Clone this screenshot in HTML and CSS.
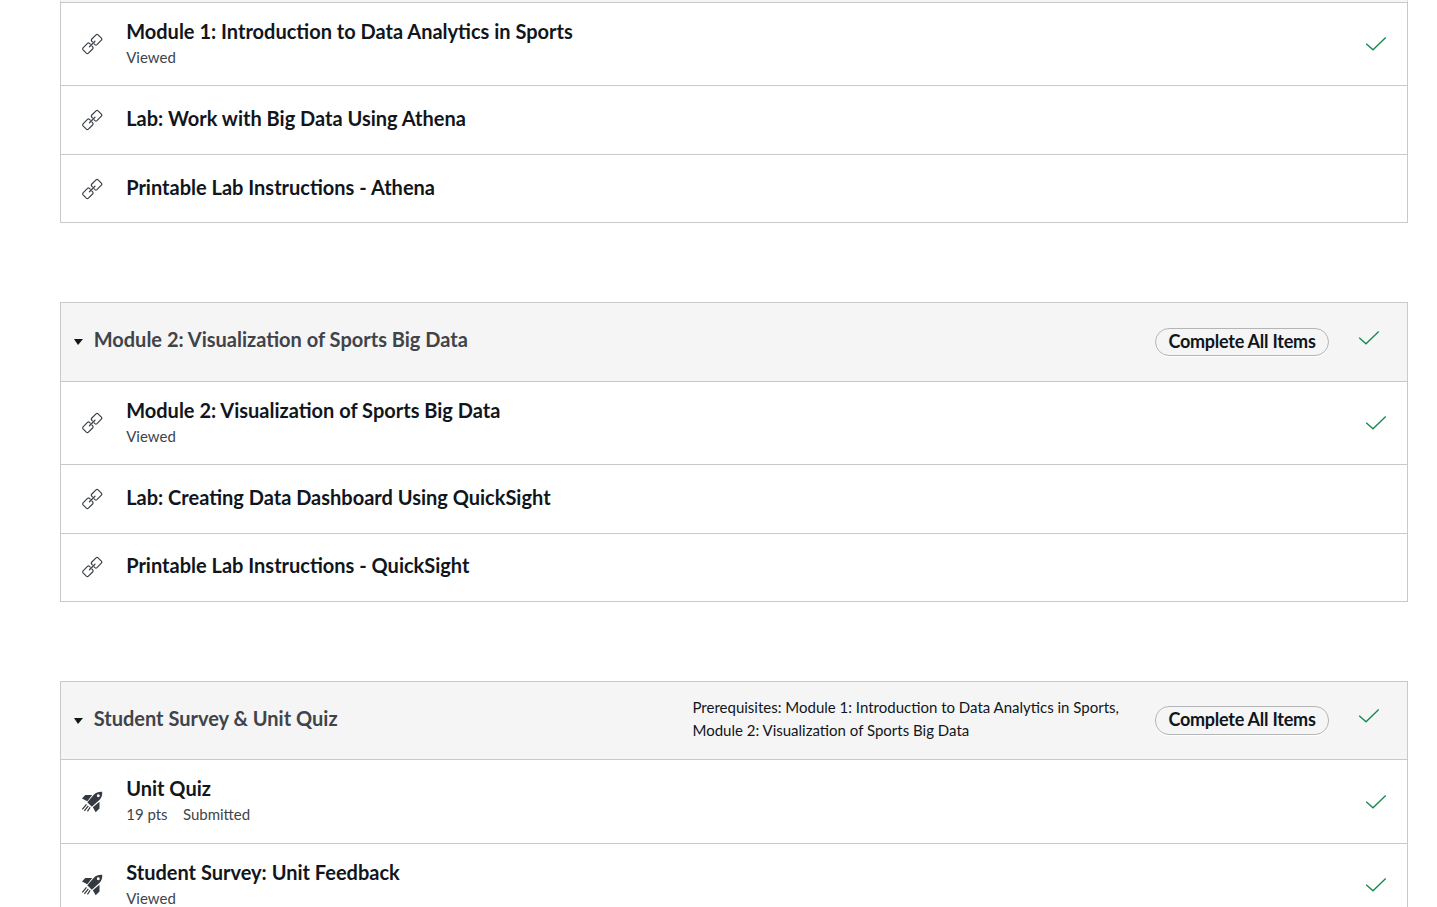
FILE: index.html
```
<!DOCTYPE html>
<html lang="en">
<head>
<meta charset="utf-8">
<title>Modules</title>
<link rel="stylesheet" href="styles.css">
</head>
<body>
<svg class="defs" width="0" height="0" aria-hidden="true">
  <symbol id="link" viewBox="0.1 0.3 21.4 21.4">
    <g fill="none" stroke="#3a3f45" stroke-width="1.15" stroke-linejoin="round" stroke-linecap="round">
      <path d="M11.2 8.9 10.4 8.1Q9.8 7.2 10.4 6.4L14.7 2.1Q15.7 1.2 16.7 2.1L19.9 5.3Q20.8 6.3 19.9 7.3L15.6 11.6Q14.6 12.4 13.7 11.6L12.9 10.8"/>
      <path d="M10.8 13.1 11.6 13.9Q12.2 14.8 11.6 15.6L7.3 19.9Q6.3 20.8 5.3 19.9L2.1 16.7Q1.2 15.7 2.1 14.7L6.4 10.4Q7.4 9.6 8.3 10.4L9.1 11.2"/>
      <path d="M8.3 13.7 13.7 8.3"/>
    </g>
  </symbol>
  <symbol id="rocket" viewBox="0.1 0.3 21.4 21.4">
    <path fill="#343a40" fill-rule="evenodd" d="M20.7 1.1C17.4.9 14.8 1.7 12.8 3.7L6.2 11.2 10.6 15.6 18 9C20.2 7 21 4.4 20.7 1.1ZM17 3.5A1.4 1.4 0 1 1 16.9 6.3 1.4 1.4 0 0 1 17 3.5Z"/>
    <path fill="#343a40" d="M11 4.2H4.2L1.1 7.6 6.2 10.3ZM18.1 10.8V17.4L14.4 20.9 11.6 16Z"/>
    <path fill="none" stroke="#343a40" stroke-width="1.2" d="M5.4 13.3 1.4 18.1M7.2 14.7 3.4 19.7M9 16.1 6.4 20.1"/>
  </symbol>
  <symbol id="check" viewBox="0 0 22 16">
    <path fill="none" stroke="#14874b" stroke-width="1.3" d="M1.2 7.7 8 13.8 20.7 1.5"/>
  </symbol>
</svg>
<main class="modules">
  <section class="module continued">
    <div class="item">
      <svg class="icon"><use href="#link"/></svg>
      <div class="info"><a class="title">Module 1: Introduction to Data Analytics in Sports</a><div class="meta"><span>Viewed</span></div></div>
      <svg class="check"><use href="#check"/></svg>
    </div>
    <div class="item single">
      <svg class="icon"><use href="#link"/></svg>
      <div class="info"><a class="title">Lab: Work with Big Data Using Athena</a></div>
    </div>
    <div class="item single last">
      <svg class="icon"><use href="#link"/></svg>
      <div class="info"><a class="title">Printable Lab Instructions - Athena</a></div>
    </div>
  </section>

  <section class="module visualization">
    <header class="head">
      <span class="arrow"></span>
      <h2 class="name">Module 2: Visualization of Sports Big Data</h2>
      <span class="pill">Complete All Items</span>
      <svg class="check"><use href="#check"/></svg>
    </header>
    <div class="item">
      <svg class="icon"><use href="#link"/></svg>
      <div class="info"><a class="title">Module 2: Visualization of Sports Big Data</a><div class="meta"><span>Viewed</span></div></div>
      <svg class="check"><use href="#check"/></svg>
    </div>
    <div class="item single">
      <svg class="icon"><use href="#link"/></svg>
      <div class="info"><a class="title">Lab: Creating Data Dashboard Using QuickSight</a></div>
    </div>
    <div class="item single last">
      <svg class="icon"><use href="#link"/></svg>
      <div class="info"><a class="title">Printable Lab Instructions - QuickSight</a></div>
    </div>
  </section>

  <section class="module survey">
    <header class="head">
      <span class="arrow"></span>
      <h2 class="name">Student Survey &amp; Unit Quiz</h2>
      <p class="prereq">Prerequisites: Module 1: Introduction to Data Analytics in Sports, Module 2: Visualization of Sports Big Data</p>
      <span class="pill">Complete All Items</span>
      <svg class="check"><use href="#check"/></svg>
    </header>
    <div class="item quiz">
      <svg class="icon"><use href="#rocket"/></svg>
      <div class="info"><a class="title">Unit Quiz</a><div class="meta"><span>19 pts</span><span>Submitted</span></div></div>
      <svg class="check"><use href="#check"/></svg>
    </div>
    <div class="item">
      <svg class="icon"><use href="#rocket"/></svg>
      <div class="info"><a class="title">Student Survey: Unit Feedback</a><div class="meta"><span>Viewed</span></div></div>
      <svg class="check"><use href="#check"/></svg>
    </div>
  </section>
</main>
</body>
</html>
```
FILE: styles.css
```
* { box-sizing: border-box; }
html, body { height: 100%; }
body {
  margin: 0;
  overflow: hidden;
  background: #fff;
  color: #11161c;
  font-family: Lato, "Open Sans", sans-serif;
}
.defs { display: block; height: 0; }
.modules {
  display: flex;
  flex-direction: column;
  gap: 79px;
  width: 1348px;
  margin-left: 60px;
}
.module { border: 1px solid #c7cacd; }
.continued { border-top: 2px solid #f5f5f5; }
.head {
  display: flex;
  align-items: flex-start;
  height: 78px;
  padding: 0 27px 0 13px;
  background: #f5f5f5;
}
.survey .head { height: 77px; }
.arrow {
  margin-top: 36px;
  border: solid transparent;
  border-width: 6px 5px 0 4px;
  border-top-color: #11161c;
}
.name {
  flex: 1;
  margin: 24px 0 0 10.7px;
  color: #3f444a;
  font-size: 20px;
  line-height: 24px;
  font-weight: 700;
}
.prereq {
  width: 440px;
  margin: 14px 22.5px 0 0;
  font-size: 15px;
  line-height: 23px;
}
.pill {
  width: 174px;
  height: 28px;
  margin: 25px 29px 0 0;
  border: 1px solid #b3b5b7;
  border-radius: 14px;
  box-shadow: 0 1px 0 #fff;
  font-size: 18px;
  line-height: 24px;
  letter-spacing: -0.24px;
  font-weight: 700;
  text-align: center;
}
.survey .pill { height: 29px; margin-top: 24px; }
.check { width: 22px; height: 16px; flex: none; }
.head .check { margin-top: 27px; }
.survey .head .check { margin-top: 26px; }
.item {
  display: flex;
  align-items: flex-start;
  height: 83px;
  padding: 0 20px;
  border-top: 1px solid #c7cacd;
}
.survey .item { height: 84px; }
.single { height: 69px; }
.last { height: 68px; }
.icon { width: 22px; height: 22px; margin-top: 30px; flex: none; }
.single .icon { margin-top: 23px; }
.visualization .last .icon { margin-top: 22px; }
.info { flex: 1; margin: 16px 0 0 23.2px; }
.single .info { margin-top: 20px; }
.visualization .last .info { margin-top: 19px; }
.title { display: block; font-size: 20px; line-height: 24px; font-weight: 700; }
.meta {
  display: flex;
  gap: 15.3px;
  margin-top: 4px;
  color: #3f444a;
  font-size: 15px;
  line-height: 20px;
}
.item .check { margin-top: 33px; }
.quiz .icon { margin-top: 31px; }
.quiz .check { margin-top: 34px; }
```
